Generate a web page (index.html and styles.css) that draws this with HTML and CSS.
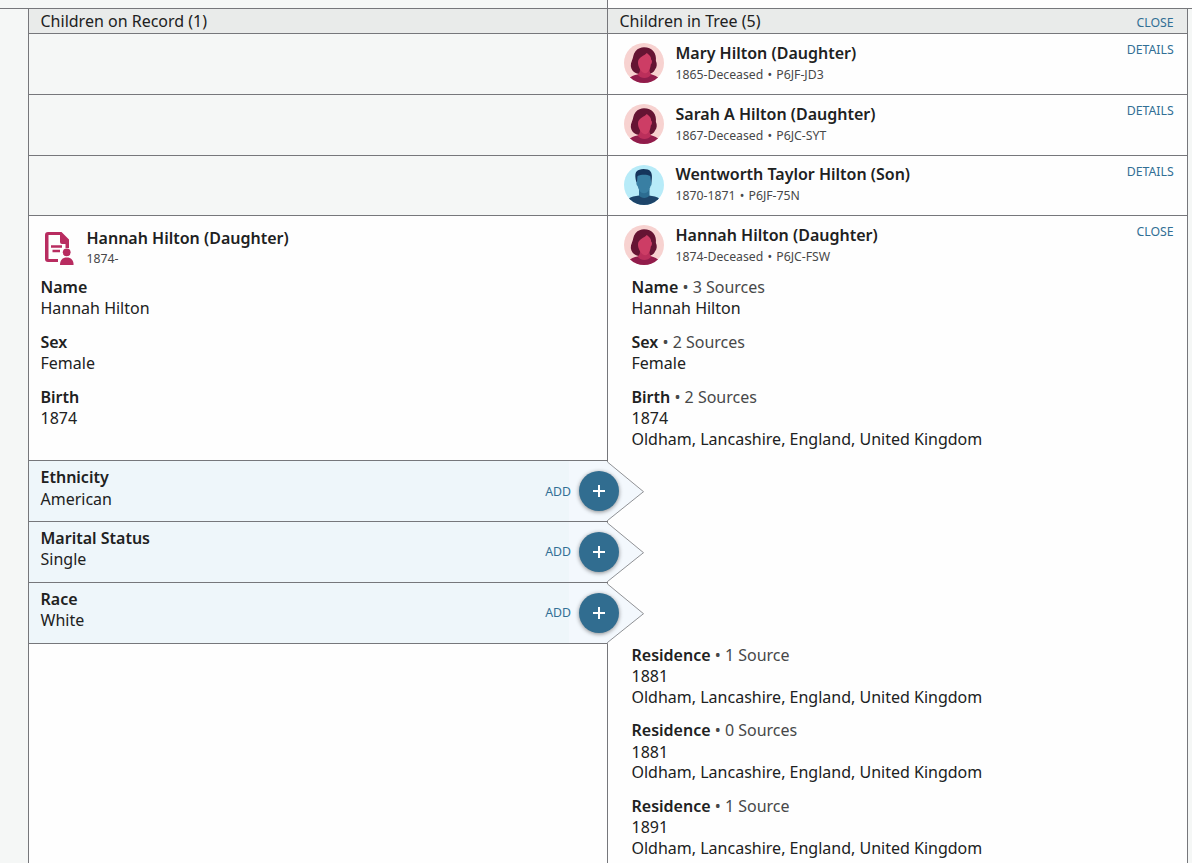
FILE: index.html
```
<!DOCTYPE html>
<html lang="en">
<head>
<meta charset="utf-8">
<title>Compare Children</title>
<link rel="stylesheet" href="styles.css">
</head>
<body>
<svg width="0" height="0" class="defs" aria-hidden="true">
  <symbol id="female" viewBox="0 0 40 40">
    <clipPath id="disc"><circle cx="20" cy="20" r="20"/></clipPath>
    <g clip-path="url(#disc)">
      <rect width="40" height="40" fill="#f7d2d0"/>
      <path d="M20 4.200c-3 0-6 1-8.500 4C9 11 9.500 14 8 17.500c-1.800 4-1.500 7 .5 10 1.500 2 3.500 3 6.500 3.500h9c4-.5 6-2 7-4.500 2.200-2.500 2.200-6 .9-8.500.3-4-.2-7-2.700-10C27.500 5.500 24 4.200 20 4.200z" fill="#651433"/>
      <path d="M6 34.500c3-2.500 7-3 10-3.500l8-.2c4 .7 7 1.200 10 3.700v7H6z" fill="#911c4b"/>
      <path d="M16 25h9.500c0 3 0 5 2 6.500-4 4.700-10.500 4.700-14 0 2.500-1.500 2.500-3.500 2.500-6.500z" fill="#bb2f5b"/>
      <path d="M22.800 10c-2.500 3-8.500 4-8.800 9-.2 4.500 2.500 8.500 5 10.500 1.700 1 3.300 1 4.800-.5 1.700-2 2.700-4.500 3-7.500 1.500-1.500 1.500-4.500.4-4.800.2-3-1.900-4.500-4.400-6.700z" fill="#cd3d65"/>
    </g>
  </symbol>
  <symbol id="male" viewBox="0 0 40 40">
    <g clip-path="url(#disc)">
      <rect width="40" height="40" fill="#b7ebf8"/>
      <path d="M4 34c3-2.500 7-2.800 11-3.500h10c4 .7 8 1 11 3.500v7H4z" fill="#1d4469"/>
      <path d="M15 24h10.500v6.500c-2 3.200-8.500 3.200-10.500 0z" fill="#2c6c91"/>
      <path d="M12.300 17c-2-8-.8-11.500 3.200-12.300 3-1.200 9.500-.7 11 1.800 2 2.500 1.500 6.500 1 11l-2 1H14z" fill="#15345b"/>
      <path d="M13.600 11c3-1.500 9-2 12.600 0 .7 1.500.3 4 1 5.800.9.700.5 3.700-.7 4.500-.8 3.500-3 7-6.500 7s-5.500-3.500-6.300-7c-1.300-.8-1.700-3.500-.9-4.500.7-1.800.2-4 .8-5.800z" fill="#397fa3"/>
    </g>
  </symbol>
  <symbol id="plus" viewBox="0 0 12 12"><path d="M6 0v12M0 6h12" stroke="#fff" stroke-width="2"/></symbol>
  <symbol id="arrow" viewBox="0 0 38 62">
    <path d="M0 1.500 36.500 31.700 0 61.500z" fill="#f3f8fd"/>
    <path d="M.5 0v2L36.500 31.700 .5 60.500v1.500" fill="none" stroke="#76777b" stroke-width=".8"/>
  </symbol>
</svg>
<main class="compare">
  <div class="strip"><div class="strip-record"></div><div class="strip-tree"></div></div>
  <div class="sheet">
    <div class="row head">
      <div class="record">Children on Record (1)</div>
      <div class="tree">Children in Tree (5)<span class="action">CLOSE</span></div>
    </div>
    <div class="row">
      <div class="record empty"></div>
      <div class="tree person"><svg class="avatar"><use href="#female"/></svg><div class="who"><b>Mary Hilton (Daughter)</b><small>1865-Deceased <i>•</i> P6JF-JD3</small></div><span class="action">DETAILS</span></div>
    </div>
    <div class="row">
      <div class="record empty"></div>
      <div class="tree person"><svg class="avatar"><use href="#female"/></svg><div class="who"><b>Sarah A Hilton (Daughter)</b><small>1867-Deceased <i>•</i> P6JC-SYT</small></div><span class="action">DETAILS</span></div>
    </div>
    <div class="row short">
      <div class="record empty"></div>
      <div class="tree person"><svg class="avatar"><use href="#male"/></svg><div class="who"><b>Wentworth Taylor Hilton (Son)</b><small>1870-1871 <i>•</i> P6JF-75N</small></div><span class="action">DETAILS</span></div>
    </div>
    <div class="row match">
      <div class="record">
        <div class="person">
          <svg class="record-icon" viewBox="0 0 30 34">
            <path d="M14 31H4a3 3 0 0 1-3-3V4a3 3 0 0 1 3-3h13.500L25 8.500V17h-3.500v-4H18a2 2 0 0 1-2-2V4H4.500v24H14z" fill="#b82c60"/>
            <path d="M7 15.500h11M8.500 20H16" stroke="#b82c60" stroke-width="2.600"/>
            <circle cx="22.700" cy="21.300" r="3.900" fill="#b82c60"/>
            <path d="M16 34c0-5 2.500-7.500 6.800-7.500s6.800 2.500 6.800 7.500z" fill="#b82c60"/>
          </svg>
          <div class="who"><b>Hannah Hilton (Daughter)</b><small>1874-</small></div>
        </div>
        <div class="facts">
          <div><b>Name</b><p>Hannah Hilton</p></div>
          <div><b>Sex</b><p>Female</p></div>
          <div><b>Birth</b><p>1874</p></div>
        </div>
      </div>
      <div class="tree">
        <div class="person"><svg class="avatar"><use href="#female"/></svg><div class="who"><b>Hannah Hilton (Daughter)</b><small>1874-Deceased <i>•</i> P6JC-FSW</small></div><span class="action">CLOSE</span></div>
        <div class="facts">
          <div><b>Name</b> <span>• 3 Sources</span><p>Hannah Hilton</p></div>
          <div><b>Sex</b> <span>• 2 Sources</span><p>Female</p></div>
          <div><b>Birth</b> <span>• 2 Sources</span><p>1874</p><p>Oldham, Lancashire, England, United Kingdom</p></div>
        </div>
      </div>
    </div>
    <div class="row add first">
      <div class="record"><div class="label"><b>Ethnicity</b><p>American</p></div><span class="action">ADD</span><div class="tip"><svg class="arrow"><use href="#arrow"/></svg><span class="button"><svg><use href="#plus"/></svg></span></div></div>
      <div class="tree"></div>
    </div>
    <div class="row add">
      <div class="record"><div class="label"><b>Marital Status</b><p>Single</p></div><span class="action">ADD</span><div class="tip"><svg class="arrow"><use href="#arrow"/></svg><span class="button"><svg><use href="#plus"/></svg></span></div></div>
      <div class="tree"></div>
    </div>
    <div class="row add">
      <div class="record"><div class="label"><b>Race</b><p>White</p></div><span class="action">ADD</span><div class="tip"><svg class="arrow"><use href="#arrow"/></svg><span class="button"><svg><use href="#plus"/></svg></span></div></div>
      <div class="tree"></div>
    </div>
    <div class="row rest">
      <div class="record"></div>
      <div class="tree">
        <div class="facts">
          <div><b>Residence</b> <span>• 1 Source</span><p>1881</p><p>Oldham, Lancashire, England, United Kingdom</p></div>
          <div><b>Residence</b> <span>• 0 Sources</span><p class="year">1881</p><p>Oldham, Lancashire, England, United Kingdom</p></div>
          <div><b>Residence</b> <span>• 1 Source</span><p>1891</p><p>Oldham, Lancashire, England, United Kingdom</p></div>
        </div>
      </div>
    </div>
  </div>
</main>
</body>
</html>
```
FILE: styles.css
```
* { box-sizing: border-box; }
body {
  margin: 0;
  background: #f5f7f6;
  color: #202121;
  font: 16px/21px "Noto Sans", sans-serif;
}
p { margin: 0; }
b { font-weight: 600; }
.defs { position: absolute; }
.compare { height: 863px; overflow: hidden; display: flex; flex-direction: column; }
.strip { flex: none; height: 9px; display: grid; grid-template-columns: 607px 1fr; border-bottom: 1px solid #76777b; }
.strip-tree { background: #fefefe; border-left: 1px solid #76777b; }
.sheet { flex: 1; min-height: 0; margin-left: 28px; width: 1160px; display: flex; flex-direction: column; border: solid #76777b; border-width: 0 1px; background: #fefefe; }
.row { flex: none; display: grid; grid-template-columns: 578px 1fr; height: 61px; border-bottom: 1px solid #76777b; }
.tree { border-left: 1px solid #76777b; }
.action { margin-left: auto; color: #326f95; font-size: 12.300px; line-height: 16px; }
.head { height: 25px; background: #e9ebea; line-height: 24px; }
.head .record { padding-left: 11.500px; }
.head .tree { display: flex; padding: 0 13.300px 0 11.500px; }
.head .action { line-height: 24px; padding-top: 2px; margin-bottom: -2px; }
.empty { background: #f5f7f6; }
.person { display: flex; }
.tree.person, .tree .person { padding: 9px 13.300px 0 16px; }
.avatar { flex: none; width: 40px; height: 40px; margin-right: 11.500px; }
.who { display: flex; flex-direction: column; }
.who b { line-height: 21px; }
.who small { color: #474849; font-size: 12.250px; line-height: 16px; margin-top: 3px; }
.who i { font-style: normal; margin: 0 1px; }
.person .action { margin-top: -1px; }
.short { height: 60px; }
.short .who { margin-top: -1px; }
.match { height: 245px; border-bottom: 0; }
.match .record { border-bottom: 1px solid #76777b; padding-left: 11.500px; }
.match .record .person { padding: 12px 0 0 3.500px; height: 61px; }
.match .record small { margin-top: 2px; }
.match .tree .person { height: 61px; }
.record-icon { width: 30px; height: 34px; margin: 3px 12.500px 0 0; }
.facts { display: flex; flex-direction: column; gap: 13px; }
.facts span { color: #474849; }
.tree .facts { padding-left: 23.500px; }
.add { border-bottom: 0; }
.add .record { display: flex; align-items: center; padding-left: 11.500px; border-bottom: 1px solid #76777b; background: linear-gradient(90deg, #eef6fa 540px, #f3f8fd 540px); }
.add .tree { border-left: 0; }
.label { padding-bottom: 6px; }
.first p { padding-top: 1px; margin-bottom: -1px; }
.first .action { padding-top: 1px; }
.tip { position: relative; z-index: 1; width: 36px; height: 60px; display: flex; align-items: center; justify-content: center; }
.arrow { position: absolute; left: 36px; top: -1px; width: 38px; height: 62px; }
.button { position: relative; left: 10px; flex: none; display: grid; place-items: center; width: 40px; height: 40px; border-radius: 50%; background: #316d90; box-shadow: 0 1px 4px rgba(0,0,0,.45); }
.button svg { width: 12px; height: 12px; }
.rest { flex: 1; border-bottom: 0; }
.rest .facts { padding-top: 1px; gap: 12.400px; }
.rest .year { padding-top: 1px; margin-bottom: -1px; }
```
